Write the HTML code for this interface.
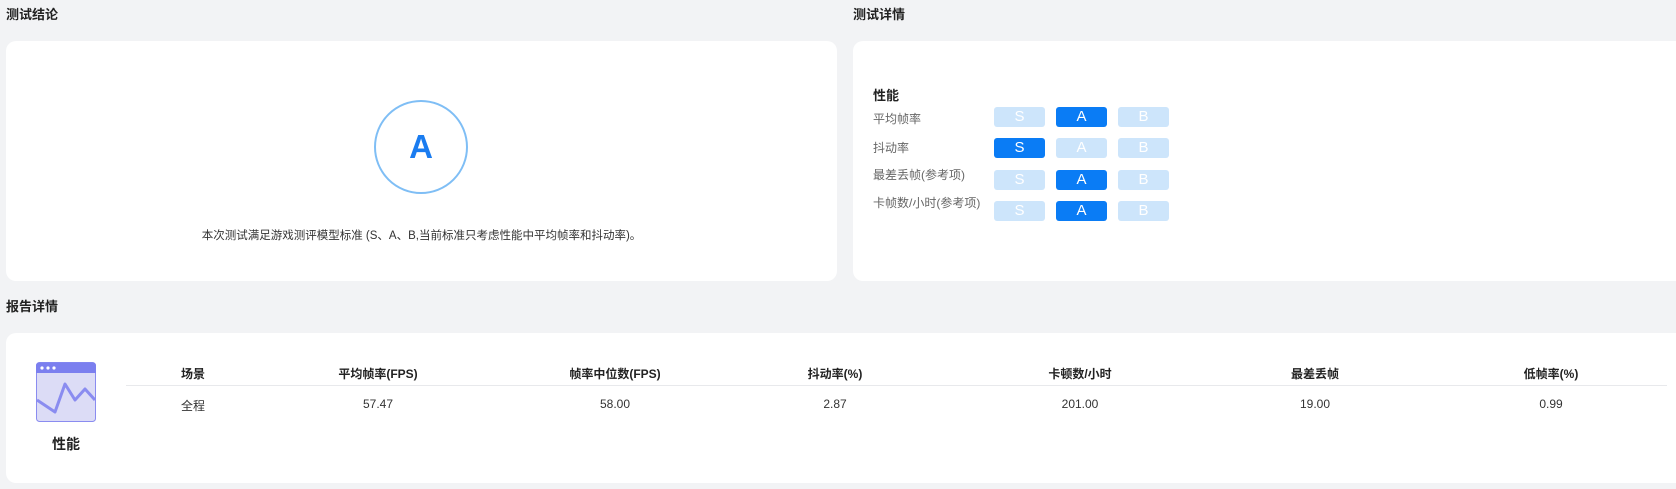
<!DOCTYPE html>
<html><head><meta charset="utf-8"><style>
*{margin:0;padding:0;box-sizing:border-box}
body{width:1676px;height:489px;background:#f2f3f5;font-family:"Liberation Sans","Noto Sans CJK SC",sans-serif;position:relative;overflow:hidden;color:#333}
.abs{position:absolute}
.t{font-size:13px;font-weight:bold;color:#222;line-height:16px}
.card{position:absolute;background:#fff;border-radius:10px}
.lbl{position:absolute;left:873px;font-size:12px;color:#666;line-height:14px}
.b{position:absolute;width:51px;height:20px;border-radius:3px;background:#cde5fb;color:#fff;font-size:15px;text-align:center;line-height:20px}
.b.on{background:#0a7cf5}
.h{position:absolute;top:365px;font-size:12px;font-weight:bold;color:#222;transform:translateX(-50%);white-space:nowrap}
.d{position:absolute;top:397px;font-size:12px;color:#333;transform:translateX(-50%);white-space:nowrap}
</style></head><body>
<div class="abs t" style="left:6px;top:7px">测试结论</div>
<div class="abs t" style="left:853px;top:7px">测试详情</div>
<div class="abs t" style="left:6px;top:299px">报告详情</div>
<div class="card" style="left:6px;top:41px;width:831px;height:240px"></div>
<div class="abs" style="left:374px;top:100px;width:94px;height:94px;border:2px solid #7fbef5;border-radius:50%;text-align:center;line-height:90px;font-size:33px;font-weight:bold;color:#1a7cf0">A</div>
<div class="abs" style="left:0;width:843px;top:227px;text-align:center;font-size:11.5px;color:#333">本次测试满足游戏测评模型标准 (S、A、B,当前标准只考虑性能中平均帧率和抖动率)。</div>
<div class="card" style="left:853px;top:41px;width:840px;height:240px"></div>
<div class="abs" style="left:873px;top:85px;font-size:13px;font-weight:bold;color:#222">性能</div>
<div class="lbl" style="top:112px">平均帧率</div>
<div class="lbl" style="top:141px">抖动率</div>
<div class="lbl" style="top:168px">最差丢帧(参考项)</div>
<div class="lbl" style="top:196px">卡帧数/小时(参考项)</div>
<div class="b" style="left:994px;top:107px">S</div><div class="b on" style="left:1056px;top:107px">A</div><div class="b" style="left:1118px;top:107px">B</div>
<div class="b on" style="left:994px;top:138px">S</div><div class="b" style="left:1056px;top:138px">A</div><div class="b" style="left:1118px;top:138px">B</div>
<div class="b" style="left:994px;top:170px">S</div><div class="b on" style="left:1056px;top:170px">A</div><div class="b" style="left:1118px;top:170px">B</div>
<div class="b" style="left:994px;top:201px">S</div><div class="b on" style="left:1056px;top:201px">A</div><div class="b" style="left:1118px;top:201px">B</div>
<div class="card" style="left:6px;top:333px;width:1690px;height:150px"></div>
<svg class="abs" style="left:36px;top:362px" width="60" height="60" viewBox="0 0 60 60">
<rect x="0.5" y="0.5" width="59" height="59" rx="3" fill="#dcdcf6" stroke="#8a8cf0"/>
<path d="M3 0.5h54a3 3 0 0 1 3 3V11H0V3.5A3 3 0 0 1 3 0.5z" fill="#7b7fef"/>
<circle cx="6" cy="6" r="1.6" fill="#fff"/><circle cx="12" cy="6" r="1.6" fill="#fff"/><circle cx="18" cy="6" r="1.6" fill="#fff"/>
<polyline points="1,38 19,50 29,22 39,38 49,27 59,38" fill="none" stroke="#8a8cf0" stroke-width="3" stroke-linejoin="round"/>
</svg>
<div class="abs" style="left:36px;width:60px;top:434px;text-align:center;font-size:14px;font-weight:bold;color:#222">性能</div>
<div class="abs" style="left:126px;top:385px;width:1541px;height:1px;background:#e8e9ec"></div>
<div class="h" style="left:193px">场景</div><div class="d" style="left:193px">全程</div>
<div class="h" style="left:378px">平均帧率(FPS)</div><div class="d" style="left:378px">57.47</div>
<div class="h" style="left:615px">帧率中位数(FPS)</div><div class="d" style="left:615px">58.00</div>
<div class="h" style="left:835px">抖动率(%)</div><div class="d" style="left:835px">2.87</div>
<div class="h" style="left:1080px">卡顿数/小时</div><div class="d" style="left:1080px">201.00</div>
<div class="h" style="left:1315px">最差丢帧</div><div class="d" style="left:1315px">19.00</div>
<div class="h" style="left:1551px">低帧率(%)</div><div class="d" style="left:1551px">0.99</div>
</body></html>
